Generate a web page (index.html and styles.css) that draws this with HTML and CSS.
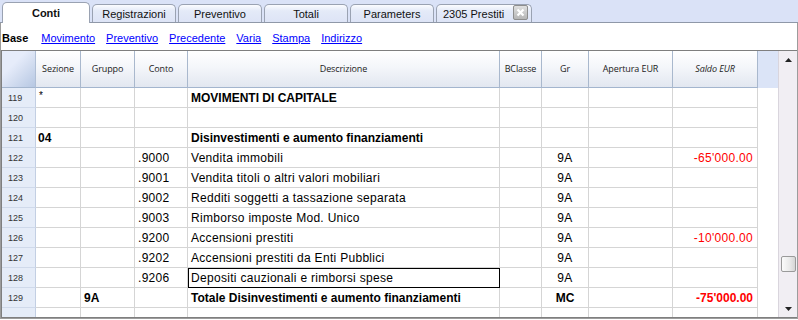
FILE: index.html
```html
<!DOCTYPE html>
<html lang="it">
<head>
    <meta charset="UTF-8">
    <title>Conti</title>
    <link rel="stylesheet" href="styles.css">
</head>
<body>
<div class="window">

    <!-- Tabs -->
    <div class="tabbar">
        <div class="tab active">Conti</div>
        <div class="tab">Registrazioni</div>
        <div class="tab">Preventivo</div>
        <div class="tab">Totali</div>
        <div class="tab">Parameters</div>
        <div class="tab last">2305 Prestiti
            <svg class="tab-close" width="15" height="15" viewBox="0 0 15 15">
                <defs>
                    <linearGradient id="cg" x1="0" y1="0" x2="0" y2="1">
                        <stop offset="0" stop-color="#e2e2e2"/>
                        <stop offset="1" stop-color="#b4b4b4"/>
                    </linearGradient>
                </defs>
                <rect x="0.5" y="0.5" width="14" height="14" rx="1.5" fill="url(#cg)" stroke="#8e8e8e"/>
                <path d="M4.5 4.5 L10.5 10.5 M10.5 4.5 L4.5 10.5" stroke="#fff" stroke-width="2.2"/>
            </svg>
        </div>
    </div>

    <div class="panel">
        <!-- Views -->
        <div class="views">
            <b>Base</b>
            <a href="#">Movimento</a>
            <a href="#">Preventivo</a>
            <a href="#">Precedente</a>
            <a href="#">Varia</a>
            <a href="#">Stampa</a>
            <a href="#">Indirizzo</a>
        </div>

        <!-- Table -->
        <div class="grid-wrap">
            <div class="grid">
                <div class="row head">
                    <div class="cell corner"></div>
                    <div class="cell">Sezione</div>
                    <div class="cell">Gruppo</div>
                    <div class="cell">Conto</div>
                    <div class="cell">Descrizione</div>
                    <div class="cell">BClasse</div>
                    <div class="cell">Gr</div>
                    <div class="cell">Apertura EUR</div>
                    <div class="cell italic">Saldo EUR</div>
                    <div class="cell filler"></div>
                </div>

                <div class="row bold">
                    <div class="cell num">119</div>
                    <div class="cell light">*</div>
                    <div class="cell"></div>
                    <div class="cell"></div>
                    <div class="cell">MOVIMENTI DI CAPITALE</div>
                    <div class="cell"></div>
                    <div class="cell center"></div>
                    <div class="cell"></div>
                    <div class="cell amount"></div>
                    <div class="cell filler"></div>
                </div>
                <div class="row">
                    <div class="cell num">120</div>
                    <div class="cell"></div>
                    <div class="cell"></div>
                    <div class="cell"></div>
                    <div class="cell"></div>
                    <div class="cell"></div>
                    <div class="cell center"></div>
                    <div class="cell"></div>
                    <div class="cell amount"></div>
                    <div class="cell filler"></div>
                </div>
                <div class="row bold">
                    <div class="cell num">121</div>
                    <div class="cell sez">04</div>
                    <div class="cell"></div>
                    <div class="cell"></div>
                    <div class="cell">Disinvestimenti e aumento finanziamenti</div>
                    <div class="cell"></div>
                    <div class="cell center"></div>
                    <div class="cell"></div>
                    <div class="cell amount"></div>
                    <div class="cell filler"></div>
                </div>
                <div class="row">
                    <div class="cell num">122</div>
                    <div class="cell"></div>
                    <div class="cell"></div>
                    <div class="cell">.9000</div>
                    <div class="cell">Vendita immobili</div>
                    <div class="cell"></div>
                    <div class="cell center">9A</div>
                    <div class="cell"></div>
                    <div class="cell amount negative">-65'000.00</div>
                    <div class="cell filler"></div>
                </div>
                <div class="row">
                    <div class="cell num">123</div>
                    <div class="cell"></div>
                    <div class="cell"></div>
                    <div class="cell">.9001</div>
                    <div class="cell">Vendita titoli o altri valori mobiliari</div>
                    <div class="cell"></div>
                    <div class="cell center">9A</div>
                    <div class="cell"></div>
                    <div class="cell amount"></div>
                    <div class="cell filler"></div>
                </div>
                <div class="row">
                    <div class="cell num">124</div>
                    <div class="cell"></div>
                    <div class="cell"></div>
                    <div class="cell">.9002</div>
                    <div class="cell">Redditi soggetti a tassazione separata</div>
                    <div class="cell"></div>
                    <div class="cell center">9A</div>
                    <div class="cell"></div>
                    <div class="cell amount"></div>
                    <div class="cell filler"></div>
                </div>
                <div class="row">
                    <div class="cell num">125</div>
                    <div class="cell"></div>
                    <div class="cell"></div>
                    <div class="cell">.9003</div>
                    <div class="cell">Rimborso imposte Mod. Unico</div>
                    <div class="cell"></div>
                    <div class="cell center">9A</div>
                    <div class="cell"></div>
                    <div class="cell amount"></div>
                    <div class="cell filler"></div>
                </div>
                <div class="row">
                    <div class="cell num">126</div>
                    <div class="cell"></div>
                    <div class="cell"></div>
                    <div class="cell">.9200</div>
                    <div class="cell">Accensioni prestiti</div>
                    <div class="cell"></div>
                    <div class="cell center">9A</div>
                    <div class="cell"></div>
                    <div class="cell amount negative">-10'000.00</div>
                    <div class="cell filler"></div>
                </div>
                <div class="row">
                    <div class="cell num">127</div>
                    <div class="cell"></div>
                    <div class="cell"></div>
                    <div class="cell">.9202</div>
                    <div class="cell">Accensioni prestiti da Enti Pubblici</div>
                    <div class="cell"></div>
                    <div class="cell center">9A</div>
                    <div class="cell"></div>
                    <div class="cell amount"></div>
                    <div class="cell filler"></div>
                </div>
                <div class="row">
                    <div class="cell num">128</div>
                    <div class="cell"></div>
                    <div class="cell"></div>
                    <div class="cell">.9206</div>
                    <div class="cell selected">Depositi cauzionali e rimborsi spese</div>
                    <div class="cell"></div>
                    <div class="cell center">9A</div>
                    <div class="cell"></div>
                    <div class="cell amount"></div>
                    <div class="cell filler"></div>
                </div>
                <div class="row bold">
                    <div class="cell num">129</div>
                    <div class="cell"></div>
                    <div class="cell">9A</div>
                    <div class="cell"></div>
                    <div class="cell">Totale Disinvestimenti e aumento finanziamenti</div>
                    <div class="cell"></div>
                    <div class="cell center">MC</div>
                    <div class="cell"></div>
                    <div class="cell amount negative">-75'000.00</div>
                    <div class="cell filler"></div>
                </div>
                <div class="row">
                    <div class="cell num"></div>
                    <div class="cell"></div>
                    <div class="cell"></div>
                    <div class="cell"></div>
                    <div class="cell"></div>
                    <div class="cell"></div>
                    <div class="cell center"></div>
                    <div class="cell"></div>
                    <div class="cell amount"></div>
                    <div class="cell filler"></div>
                </div>
            </div>

            <!-- Vertical scrollbar -->
            <div class="vscroll">
                <div class="sb-btn">
                    <svg width="7" height="4" viewBox="0 0 7 4"><path d="M0 4 L3.5 0 L7 4 Z" fill="#222"/></svg>
                </div>
                <div class="sb-thumb"></div>
                <div class="sb-btn down">
                    <svg width="7" height="4" viewBox="0 0 7 4"><path d="M0 0 L7 0 L3.5 4 Z" fill="#222"/></svg>
                </div>
            </div>
        </div>
    </div>
</div>
</body>
</html>
```

FILE: styles.css
```css
body {
    margin: 0;
    padding: 0;
    background-color: #fff;
    font-family: "Liberation Sans", Arial, sans-serif;
    color: #000;
}
.window {
    width: 798px;
    height: 319px;
    display: flex;
    flex-direction: column;
    overflow: hidden;
}

/* Tabs */
.tabbar {
    height: 22px;
    flex-shrink: 0;
    display: flex;
    align-items: flex-end;
    gap: 2px;
    padding-left: 2px;
    background-color: #dae2f7;
    border-bottom: 1px solid #8f98a8;
}
.tab {
    box-sizing: border-box;
    width: 84px;
    height: 18px;
    display: flex;
    align-items: center;
    justify-content: center;
    font-size: 11px;
    color: #111;
    border: 1px solid #9aa2b2;
    border-bottom: none;
    border-radius: 5px 5px 0 0;
    background: linear-gradient(#fbfcff, #e4eaf8 35%, #dde4f6);
}
.tab.active {
    width: 88px;
    height: 21px;
    margin-bottom: -1px;
    background: #fff;
    font-weight: bold;
    padding-bottom: 1px;
}
.tab.last {
    width: 96px;
    justify-content: flex-start;
    padding-left: 6px;
}
.tab-close {
    margin-left: 9px;
    margin-top: -2px;
}

/* Panel */
.panel {
    flex: 1;
    display: flex;
    flex-direction: column;
    border: 1px solid #9c9c9c;
    border-top: none;
    min-height: 0;
}
.views {
    height: 27px;
    flex-shrink: 0;
    display: flex;
    align-items: center;
    padding: 2px 0 0 1px;
    box-sizing: border-box;
    font-size: 11px;
}
.views b {
    margin-right: 13px;
}
.views a {
    color: #0000ff;
    margin-right: 11px;
}

/* Grid */
.grid-wrap {
    flex: 1;
    display: flex;
    min-height: 0;
    border-top: 1px solid #7f7f7f;
    border-left: 1px solid #7f7f7f;
    border-bottom: 1px solid #7f7f7f;
}
.grid {
    width: 776px;
    flex-shrink: 0;
    display: flex;
    flex-direction: column;
    overflow: hidden;
}
.row {
    display: grid;
    grid-template-columns: 34px 45px 54px 53px 312px 42px 47px 84px 85px 20px;
    height: 20px;
    flex-shrink: 0;
}
.cell {
    box-sizing: border-box;
    border-right: 1px solid #d5d5d5;
    border-bottom: 1px solid #d5d5d5;
    padding: 0 3px;
    font-size: 12px;
    line-height: 20px;
    letter-spacing: 0.3px;
    white-space: nowrap;
    overflow: hidden;
}
.row.bold .cell {
    font-weight: bold;
    letter-spacing: 0;
}
.row .cell.num {
    background-color: #e5ecf8;
    border-right-color: #c3cfe3;
    border-bottom-color: #cfd9ea;
    padding-left: 6px;
    font-size: 9px;
    font-weight: normal;
    color: #333;
    letter-spacing: 0;
}
.row .cell.light {
    font-weight: normal;
    padding-left: 3px;
    font-size: 10px;
    line-height: 15px;
}
.cell.sez {
    padding-left: 2px;
}
.cell.center {
    text-align: center;
}
.cell.amount {
    text-align: right;
    padding-right: 4px;
}
.cell.negative {
    color: #ff0000;
}
.cell.filler {
    border: none;
}
.cell.selected {
    outline: 1px solid #000;
    outline-offset: -1px;
}

/* Header row */
.row.head {
    height: 37px;
}
.head .cell {
    display: flex;
    align-items: center;
    justify-content: center;
    padding: 0;
    font-family: "Open Sans", "Liberation Sans", sans-serif;
    font-size: 9px;
    letter-spacing: -0.1px;
    color: #222;
    background: linear-gradient(#ffffff, #f4f6fa 45%, #e2e7f0);
    border-right: 1px solid #a9b8cd;
    border-bottom: 1px solid #a3b5ce;
}
.head .cell.italic {
    font-style: italic;
}
.head .cell.corner {
    background: linear-gradient(135deg, #e6ecfa 35%, #b6c7e2);
    border-right-color: #b0bfd6;
}
.head .cell.filler {
    background: #dbe4f7;
    border: none;
}

/* Scrollbar */
.vscroll {
    width: 19px;
    box-sizing: border-box;
    display: flex;
    flex-direction: column;
    align-items: center;
    background-color: #f1eef3;
    border-left: 1px solid #d9d5dd;
}
.sb-btn {
    height: 17px;
    width: 100%;
    display: flex;
    align-items: center;
    justify-content: center;
    flex-shrink: 0;
}
.sb-btn.down {
    margin-top: auto;
}
.sb-thumb {
    width: 15px;
    height: 16px;
    margin-top: 188px;
    box-sizing: border-box;
    border: 1px solid #9a9a9a;
    border-radius: 2px;
    background: linear-gradient(90deg, #fbfbfb, #e9e9e9 60%, #d5d5d5);
}
```
